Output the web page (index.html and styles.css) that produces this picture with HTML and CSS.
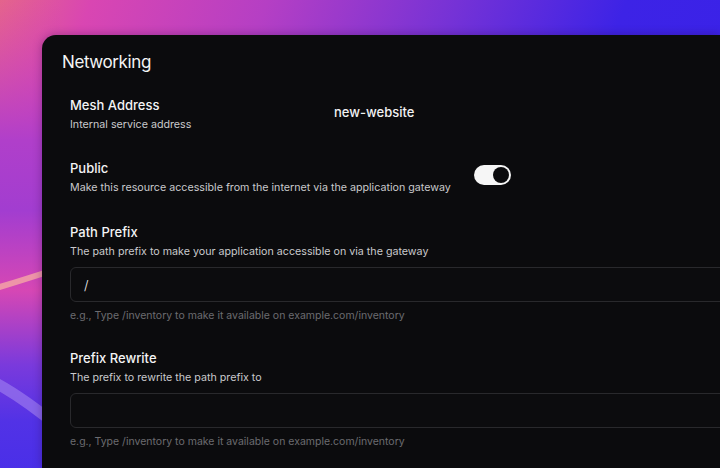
FILE: index.html
```html
<!DOCTYPE html>
<html lang="en">
<head>
<meta charset="utf-8">
<title>Networking</title>
<link rel="stylesheet" href="styles.css">
</head>
<body>
<svg class="backdrop" width="720" height="468" viewBox="0 0 720 468" preserveAspectRatio="none" aria-hidden="true">
  <defs>
    <linearGradient id="base" x1="0" y1="0" x2="1" y2="0.25">
      <stop offset="0" stop-color="#e4648c"/>
      <stop offset="0.12" stop-color="#d946b2"/>
      <stop offset="0.35" stop-color="#b53fc4"/>
      <stop offset="0.6" stop-color="#7532d6"/>
      <stop offset="0.82" stop-color="#3d23e6"/>
      <stop offset="1" stop-color="#3a22e8"/>
    </linearGradient>
    <linearGradient id="side" x1="0" y1="0" x2="0" y2="1">
      <stop offset="0" stop-color="#d846b4" stop-opacity="0"/>
      <stop offset="0.3" stop-color="#b03fca"/>
      <stop offset="0.45" stop-color="#a23dd0"/>
      <stop offset="0.62" stop-color="#d647b4"/>
      <stop offset="0.78" stop-color="#7a3adc"/>
      <stop offset="0.9" stop-color="#5232e6"/>
      <stop offset="1" stop-color="#4a2fe8"/>
    </linearGradient>
  </defs>
  <rect width="720" height="468" fill="url(#base)"/>
  <rect width="60" height="468" fill="url(#side)"/>
  <path d="M-10 290 Q 20 281 60 268" fill="none" stroke="#f3a2a6" stroke-width="6" stroke-linecap="round" opacity="0.85"/>
  <path d="M-10 380 Q 20 395 60 428" fill="none" stroke="#9a78ee" stroke-width="11" stroke-linecap="round" opacity="0.7"/>
</svg>
<main class="card">
  <h1 class="title">Networking</h1>
  <section class="field row mesh">
    <div class="info">
      <div class="label">Mesh Address</div>
      <div class="desc">Internal service address</div>
    </div>
    <div class="value">new-website</div>
  </section>
  <section class="field row public">
    <div class="info">
      <div class="label">Public</div>
      <div class="desc">Make this resource accessible from the internet via the application gateway</div>
    </div>
    <div class="toggle on"><span class="knob"></span></div>
  </section>
  <section class="field">
    <div class="label">Path Prefix</div>
    <div class="desc">The path prefix to make your application accessible on via the gateway</div>
    <div class="input">/</div>
    <div class="hint">e.g., Type /inventory to make it available on example.com/inventory</div>
  </section>
  <section class="field">
    <div class="label">Prefix Rewrite</div>
    <div class="desc">The prefix to rewrite the path prefix to</div>
    <div class="input"></div>
    <div class="hint">e.g., Type /inventory to make it available on example.com/inventory</div>
  </section>
</main>
</body>
</html>
```
FILE: styles.css
```css
html, body {
  margin: 0;
  padding: 0;
  width: 720px;
  height: 468px;
  overflow: hidden;
}
body {
  position: relative;
  font-family: Inter, "Liberation Sans", sans-serif;
  background: #7a35d4;
  padding: 35px 0 0 42px;
  box-sizing: border-box;
}
.backdrop {
  position: absolute;
  left: 0;
  top: 0;
  z-index: 0;
}
.card {
  position: relative;
  z-index: 1;
  width: 678px;
  height: 433px;
  overflow: hidden;
  background: #0b0b0d;
  border-radius: 14px 0 0 0;
  box-shadow: 0 0 10px rgba(40, 10, 60, 0.35);
  padding: 14px 0 0 20px;
  box-sizing: border-box;
  color: #f2f2f3;
}
.title {
  margin: 0 0 22px 0;
  font-size: 17px;
  line-height: 26px;
  font-weight: 400;
  letter-spacing: -0.4px;
  color: #f4f4f5;
}
.field {
  margin-left: 8px;
  margin-bottom: 28px;
}
.row {
  display: flex;
  align-items: flex-start;
  margin-bottom: 30px;
}
.mesh {
  margin-bottom: 29px;
}
.mesh .info {
  width: 264px;
}
.public .info {
  margin-right: 23px;
}
.label {
  font-size: 13px;
  line-height: 16px;
  font-weight: 500;
  color: #f4f4f5;
}
.desc {
  margin-top: 5px;
  font-size: 10.7px;
  line-height: 13px;
  color: #c9c9cc;
}
.value {
  margin-top: 7px;
  font-size: 13px;
  line-height: 16px;
  font-weight: 500;
  color: #f2f2f3;
}
.toggle {
  width: 37px;
  height: 20px;
  border-radius: 10px;
  background: #f6f6f6;
  display: flex;
  align-items: center;
  justify-content: flex-end;
  padding: 0 2px;
  box-sizing: border-box;
  margin-top: 5px;
}
.knob {
  width: 16px;
  height: 16px;
  border-radius: 50%;
  background: #0b0b0d;
}
.input {
  margin-top: 9px;
  width: 680px;
  height: 35px;
  box-sizing: border-box;
  border: 1px solid #29292c;
  border-radius: 6px;
  background: #0c0c0e;
  padding: 0 13px;
  display: flex;
  align-items: center;
  font-size: 13px;
  font-weight: 300;
  color: #f2f2f3;
}
.hint {
  margin-top: 7px;
  font-size: 10.5px;
  line-height: 13px;
  color: #6c6c70;
}
```
